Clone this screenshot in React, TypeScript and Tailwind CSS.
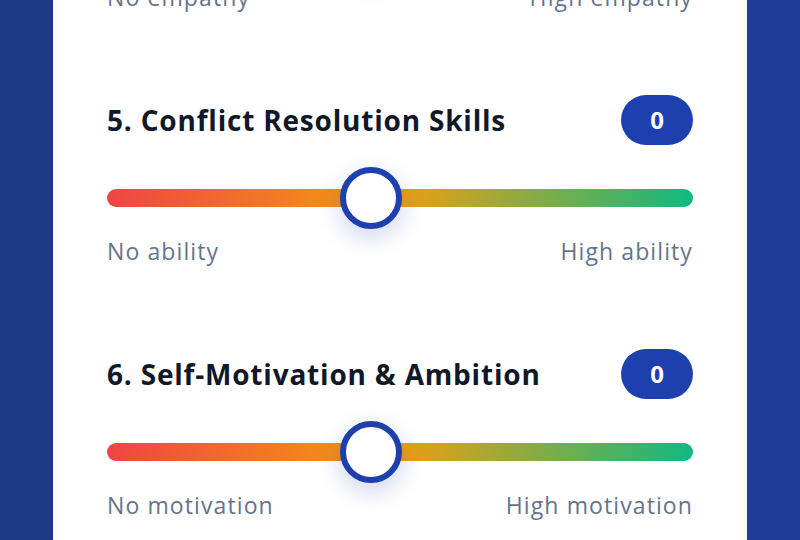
import React from 'react';

type Question = {
  id: number;
  title: string;
  low: string;
  high: string;
  value: number;
};

const questions: Question[] = [
  { id: 4, title: '4. Empathy & Emotional Intelligence', low: 'No empathy', high: 'High empathy', value: 0 },
  { id: 5, title: '5. Conflict Resolution Skills', low: 'No ability', high: 'High ability', value: 0 },
  { id: 6, title: '6. Self-Motivation & Ambition', low: 'No motivation', high: 'High motivation', value: 0 },
];

function ScoreSlider({ question }: { question: Question }) {
  return (
    <div className="flex flex-col">
      <div className="flex h-[50px] items-center justify-between">
        <h3 className="text-[28px] font-bold tracking-[0.8px] text-[#111827]">{question.title}</h3>
        <span className="flex h-[50px] w-[72px] items-center justify-center rounded-full bg-[#1e40af] text-[24px] font-bold text-white">
          {question.value}
        </span>
      </div>

      <div className="relative mt-[22px] flex h-[62px] items-center">
        <div className="h-[18px] w-full rounded-full bg-[linear-gradient(to_right,#ef4444,#f59e0b_48%,#10b981)]" />
        <div className="absolute left-[233px] top-0 h-[62px] w-[62px] rounded-full border-[6px] border-[#1e40af] bg-white shadow-[0_8px_24px_rgba(30,64,175,0.22)]" />
      </div>

      <div className="mt-2 flex justify-between text-[23px] font-medium leading-[28px] tracking-[1.1px] text-[#64748b]">
        <span>{question.low}</span>
        <span>{question.high}</span>
      </div>
    </div>
  );
}

export default function App() {
  return (
    <div
      className="h-[540px] w-full overflow-hidden bg-gradient-to-r from-[#1e3a84] to-[#1e3c98]"
      style={{ fontFamily: '"Open Sans", "Noto Sans", sans-serif' }}
    >
      <div className="mx-[53px] -mt-[159px] flex flex-col gap-[84px] bg-white px-[54px] pb-10">
        {questions.map((q) => (
          <ScoreSlider key={q.id} question={q} />
        ))}
      </div>
    </div>
  );
}
